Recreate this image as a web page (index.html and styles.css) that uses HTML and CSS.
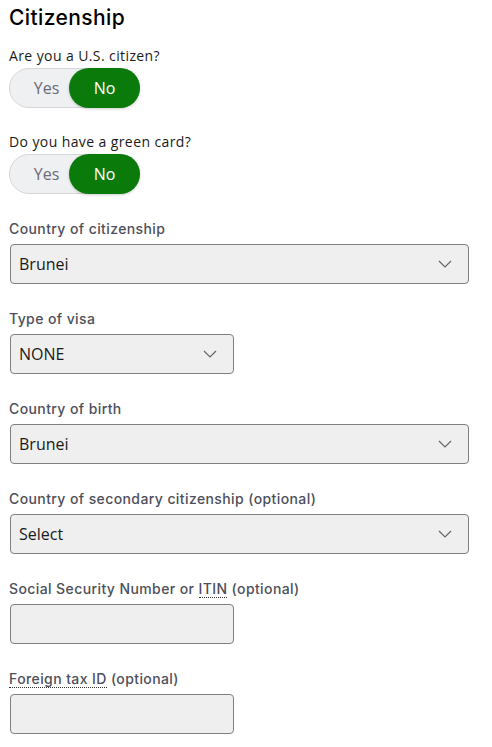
FILE: index.html
```html
<!DOCTYPE html>
<html>
<head>
<meta charset="utf-8">
<link rel="stylesheet" href="styles.css">
</head>
<body>
<main class="form">
  <h2 class="title">Citizenship</h2>

  <div class="question">
    <p class="q-label">Are you a U.S. citizen?</p>
    <div class="toggle">
      <span class="opt">Yes</span>
      <span class="opt on">No</span>
    </div>
  </div>

  <div class="question">
    <p class="q-label">Do you have a green card?</p>
    <div class="toggle">
      <span class="opt">Yes</span>
      <span class="opt on">No</span>
    </div>
  </div>

  <div class="field">
    <label class="f-label">Country of citizenship</label>
    <div class="select wide"><span>Brunei</span><svg class="chev" width="14" height="8" viewBox="0 0 14 8"><path d="M1 1l6 6 6-6" fill="none" stroke="#666" stroke-width="1.2"/></svg></div>
  </div>

  <div class="field">
    <label class="f-label">Type of visa</label>
    <div class="select narrow"><span>NONE</span><svg class="chev" width="14" height="8" viewBox="0 0 14 8"><path d="M1 1l6 6 6-6" fill="none" stroke="#666" stroke-width="1.2"/></svg></div>
  </div>

  <div class="field">
    <label class="f-label">Country of birth</label>
    <div class="select wide"><span>Brunei</span><svg class="chev" width="14" height="8" viewBox="0 0 14 8"><path d="M1 1l6 6 6-6" fill="none" stroke="#666" stroke-width="1.2"/></svg></div>
  </div>

  <div class="field">
    <label class="f-label">Country of secondary citizenship (optional)</label>
    <div class="select wide"><span>Select</span><svg class="chev" width="14" height="8" viewBox="0 0 14 8"><path d="M1 1l6 6 6-6" fill="none" stroke="#666" stroke-width="1.2"/></svg></div>
  </div>

  <div class="field">
    <label class="f-label">Social Security Number or <span class="abbr">ITIN</span> (optional)</label>
    <div class="input narrow"></div>
  </div>

  <div class="field">
    <label class="f-label"><span class="abbr">Foreign tax ID</span> (optional)</label>
    <div class="input narrow"></div>
  </div>
</main>
</body>
</html>
```

FILE: styles.css
```css
* { box-sizing: border-box; }
body {
  margin: 0;
  background: #fff;
  font-family: "Open Sans", "Noto Sans", sans-serif;
  color: #1a1a1a;
}
.form {
  padding: 4px 9px 0 9px;
  display: flex;
  flex-direction: column;
}
.title {
  margin: 0;
  font-family: Inter, "Open Sans", sans-serif;
  font-size: 21px;
  font-weight: 500;
  line-height: 28px;
  letter-spacing: 0.4px;
  color: #000;
}
.question {
  margin-top: 14px;
}
.question + .question { margin-top: 24px; }
.q-label {
  margin: 0 0 2px 0;
  font-size: 14px;
  line-height: 20px;
  letter-spacing: 0.4px;
  color: #1a1a1a;
}
.toggle {
  display: flex;
  width: 131px;
  height: 40px;
  border-radius: 20px;
  background: #eff0f2;
  border: 1px solid #d6d6d8;
}
.opt {
  flex: 1;
  display: flex;
  align-items: center;
  justify-content: center;
  font-size: 16px;
  color: #6b6b78;
  padding-left: 14px;
}
.opt.on {
  flex: 0 0 71px;
  margin: -1px -1px -1px 0;
  background: #0a7b0a;
  color: #fff;
  border-radius: 20px;
  padding-left: 0;
  box-shadow: 0 1px 3px rgba(0,0,0,0.2);
}
.field {
  margin-top: 25px;
  display: flex;
  flex-direction: column;
}
.question + .field { margin-top: 25px; }
.f-label {
  font-family: Inter, "Open Sans", sans-serif;
  font-size: 14px;
  font-weight: 500;
  line-height: 20px;
  letter-spacing: 0.4px;
  color: #4d4f5a;
  margin-bottom: 5px;
}
.abbr {
  border-bottom: 1px dotted #333;
}
.select, .input {
  height: 40px;
  margin-left: 1px;
  background: #efefef;
  border: 1px solid #7f7f7f;
  border-radius: 4px;
  display: flex;
  align-items: center;
  justify-content: space-between;
  padding: 0 16px 0 8px;
  font-size: 16px;
  color: #1a1a1a;
}
.wide { width: 459px; }
.narrow { width: 224px; }
.chev { flex: none; }
```
